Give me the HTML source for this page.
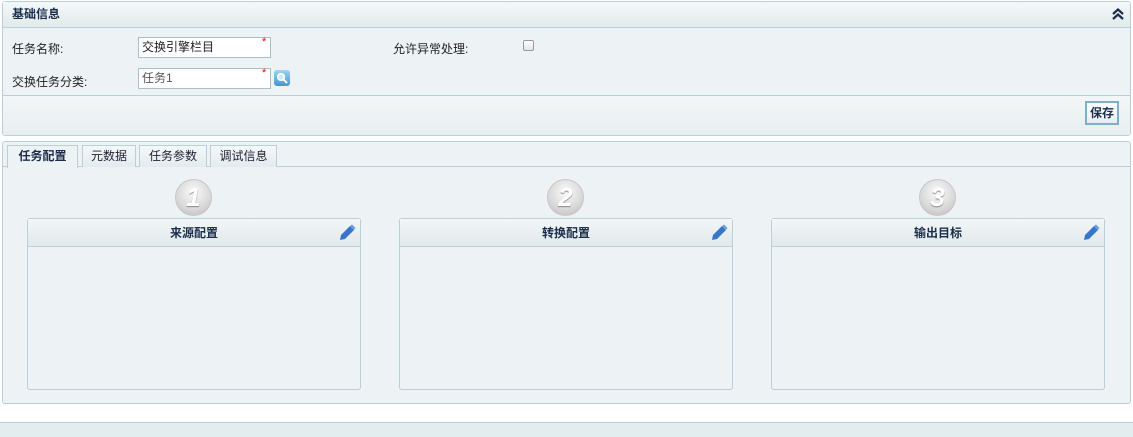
<!DOCTYPE html>
<html><head><meta charset="utf-8"><style>
*{box-sizing:border-box;margin:0;padding:0}
body{width:1133px;height:437px;background:#fff;font-family:"Liberation Sans","Noto Sans CJK SC",sans-serif;font-size:12px;color:#222;position:relative;overflow:hidden}
.abs{position:absolute}
.panel{border:1px solid #b9d0d6;border-radius:3px;background:#edf2f5}
.hdr{background:linear-gradient(#f4f8f9,#e2eaec);border-bottom:1px solid #b9d0d6}
.inp{position:absolute;width:133px;height:21px;border:1px solid #a8c0c8;background:#fff;padding:2px 3px;font-size:12px;line-height:15px}
.star{position:absolute;color:#e00;font-size:11px}
.tab{position:absolute;top:145px;height:22px;border:1px solid #b9d0d6;border-bottom:none;background:linear-gradient(#f4f8f9,#e3ebee);text-align:center;line-height:21px;font-size:12px;color:#223}
.box{position:absolute;top:218px;width:334px;height:172px;border:1px solid #b9d0d6;border-radius:3px;background:#edf2f5}
.box .h{height:28px;background:linear-gradient(#f2f6f7,#e1e9eb);border-bottom:1px solid #b9d0d6;text-align:center;font-weight:bold;line-height:28px;color:#1b2d4a;font-size:12px;position:relative}
.circ{position:absolute;top:179px;width:37px;height:37px;border-radius:50%;background:radial-gradient(circle at 50% 35%,#fafafa,#d8d8d8 60%,#b8b8b8);border:1px solid #c8c8c8;text-align:center;line-height:35px;font-size:26px;font-style:italic;color:#fff;font-weight:bold;text-shadow:0 1px 1px #888}
.pen{position:absolute;right:4px;top:5px}
</style></head><body>
<div class="abs panel" style="left:2px;top:1px;width:1129px;height:135px;">
 <div class="hdr" style="height:26px;padding-left:9px;line-height:24px;font-weight:bold;color:#1b2d4a;font-size:12px;">基础信息
 <svg class="abs" style="right:6px;top:6px" width="12" height="12" viewBox="0 0 12 12"><path d="M1 6 L6 1.5 L11 6 M1 11 L6 6.5 L11 11" stroke="#1b2d4a" stroke-width="2.2" fill="none"/></svg></div>
 <div class="abs" style="left:0;top:93px;width:1127px;height:40px;border-top:1px solid #b9d0d6;background:linear-gradient(#f3f6f7,#e8eef0)"></div>
</div>
<div class="abs" style="left:12px;top:40px">任务名称:</div>
<div class="inp" style="left:138px;top:37px">交换引擎栏目</div><div class="star" style="left:262px;top:36px">*</div>
<div class="abs" style="left:393px;top:40px">允许异常处理:</div>
<div class="abs" style="left:523px;top:40px;width:11px;height:11px;border:1px solid #999;border-radius:2px;background:linear-gradient(#fff,#e4e4e4)"></div>
<div class="abs" style="left:12px;top:73px">交换任务分类:</div>
<div class="inp" style="left:138px;top:68px;color:#555">任务1</div><div class="star" style="left:262px;top:67px">*</div>
<div class="abs" style="left:274px;top:70px;width:16px;height:16px;border-radius:3px;background:linear-gradient(#9fd4f3,#3f97d4)"><svg style="position:absolute;left:2px;top:2px" width="12" height="12" viewBox="0 0 12 12"><circle cx="5" cy="5" r="3.3" stroke="#fff" stroke-width="1.6" fill="#cde9fa"/><path d="M7.5 7.5 L11 11" stroke="#fff" stroke-width="2"/></svg></div>
<div class="abs" style="left:1085px;top:101px;width:34px;height:24px;border:2px solid #7fb0c8;background:linear-gradient(#fff,#e6eef2);font-weight:bold;text-align:center;line-height:20px;color:#1b2d4a">保存</div>

<div class="abs panel" style="left:2px;top:141px;width:1129px;height:263px;"></div>
<div class="abs" style="left:3px;top:166px;width:1127px;height:1px;background:#b9d0d6"></div>
<div class="tab" style="left:7px;width:71px;height:23px;background:#edf2f5;font-weight:bold;color:#1b2d4a">任务配置</div>
<div class="tab" style="left:82px;width:54px">元数据</div>
<div class="tab" style="left:139px;width:68px">任务参数</div>
<div class="tab" style="left:210px;width:67px">调试信息</div>

<div class="circ" style="left:175px">1</div>
<div class="circ" style="left:547px">2</div>
<div class="circ" style="left:919px">3</div>
<div class="box" style="left:27px"><div class="h">来源配置<svg class="pen" width="17" height="17" viewBox="0 0 17 17"><path d="M1 16 L2 11 L11 2 L15 6 L6 15 Z" fill="#3a74c9"/><path d="M11 2 L13 0.5 L16.5 4 L15 6Z" fill="#6da0e0"/></svg></div></div>
<div class="box" style="left:399px"><div class="h">转换配置<svg class="pen" width="17" height="17" viewBox="0 0 17 17"><path d="M1 16 L2 11 L11 2 L15 6 L6 15 Z" fill="#3a74c9"/><path d="M11 2 L13 0.5 L16.5 4 L15 6Z" fill="#6da0e0"/></svg></div></div>
<div class="box" style="left:771px"><div class="h">输出目标<svg class="pen" width="17" height="17" viewBox="0 0 17 17"><path d="M1 16 L2 11 L11 2 L15 6 L6 15 Z" fill="#3a74c9"/><path d="M11 2 L13 0.5 L16.5 4 L15 6Z" fill="#6da0e0"/></svg></div></div>

<div class="abs" style="left:0;top:422px;width:1133px;height:15px;border-top:1px solid #b9d0d6;background:#e3ecee"></div>
</body></html>
